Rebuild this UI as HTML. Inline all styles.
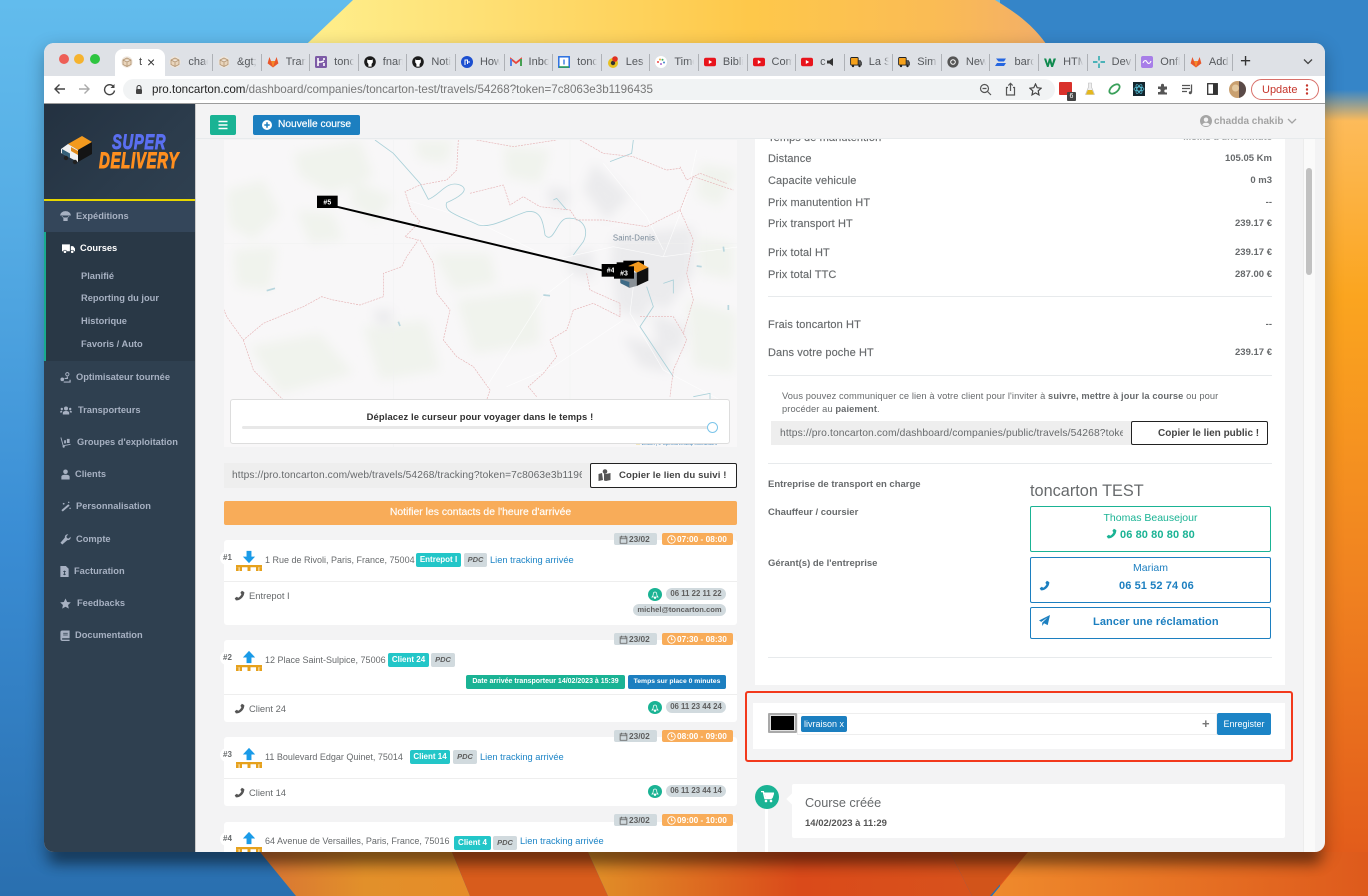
<!DOCTYPE html>
<html lang="fr"><head><meta charset="utf-8"><title>toncarton</title>
<style>
*{box-sizing:border-box}
html,body{margin:0;padding:0;width:1368px;height:896px;overflow:hidden;background:#e8701c;font-family:"Liberation Sans",sans-serif;color:#676a6c}
.a{position:absolute}
.t{position:absolute;white-space:nowrap;line-height:14px;height:14px;margin-top:1px}
#win{position:absolute;left:0;top:0;width:1368px;height:896px;clip-path:inset(43px 43px 44px 44px round 10px);background:#f3f3f4}
.tabs{position:absolute;left:164.4px;top:49px;display:flex}
.tab{position:relative;width:48.6px;height:27px}
.tab:after{content:"";position:absolute;right:0;top:5px;height:17px;width:1px;background:#aeb1b6}
.tab svg{position:absolute;left:5px;top:7px;width:12px;height:12px}
.tab span{position:absolute;left:24px;top:6px;width:20px;overflow:hidden;white-space:nowrap;font-size:11px;line-height:14px;color:#55585c;-webkit-mask-image:linear-gradient(90deg,#000 70%,transparent);mask-image:linear-gradient(90deg,#000 70%,transparent)}
.nav{font-size:9.3px;font-weight:bold;color:#a7b1c2;margin-top:2px}
.ni{position:absolute;left:60px;width:11px;height:11px;fill:#a7b1c2}
.l{font-size:11px;color:#676a6c;left:768px;-webkit-text-stroke:.15px #676a6c;letter-spacing:.1px}
.v{font-size:9.5px;font-weight:bold;color:#676a6c;right:96px}
.hr{position:absolute;left:768px;width:504px;height:1px;background:#e7eaec}
.card{position:absolute;left:224px;width:513px;background:#fff;border-radius:3px}
.div{position:absolute;left:224px;width:513px;height:1px;background:#eeeeee}
.bd{position:absolute;height:12px;line-height:12px;border-radius:2px;font-size:8.3px;font-weight:bold;white-space:nowrap}
.date{left:614px;width:43px;background:#d1dade;color:#5e5e5e;padding-left:15px}
.time{left:662px;width:71px;background:#f8ac59;color:#fff;padding-left:15px}
.date svg,.time svg{position:absolute;left:5px;top:1.5px;width:9px;height:9px}
.addr{font-size:9px;color:#676a6c}
.rw{font-size:9.4px;color:#676a6c}
.num{font-size:8px;font-weight:bold;color:#676a6c}
.numc{position:absolute;left:220px;width:14px;height:14px;border-radius:50%;background:#fff}
.tag{position:absolute;height:14px;line-height:14px;text-align:center;border-radius:2px;font-size:8px;font-weight:bold;color:#fff;background:#23c6c8}
.pdc{position:absolute;height:14px;line-height:14px;text-align:center;border-radius:2px;font-size:7.5px;font-weight:bold;font-style:italic;color:#5e5e5e;background:#d1dade}
.lk{font-size:9.3px;color:#1c84c6}
.pill{position:absolute;height:12px;line-height:12px;border-radius:6px;background:#d1dade;color:#5e5e5e;font-size:7.8px;font-weight:bold;text-align:center;white-space:nowrap}
.bell{position:absolute;left:648px;width:14px;height:13px;border-radius:50%;background:#1ab394}
.bell svg{position:absolute;left:3px;top:2.5px;width:8px;height:8px}
.ph{position:absolute;width:11px;height:11px}
</style></head><body>
<svg width="0" height="0" style="position:absolute"><defs>
<symbol id="phone" viewBox="0 0 16 16"><path d="M11.5 1 15 3C15.3 9.5 9 15.5 2.8 15L1 12 4.2 9.8 6 11.2C8.2 10.2 10 8.2 10.8 6L9.2 4.2Z"/></symbol>
<symbol id="cal" viewBox="0 0 12 12"><path d="M1.5 2.5h9v8.5h-9zM1.5 5h9M3.5 1v2.5M8.5 1v2.5" fill="none" stroke="currentColor" stroke-width="1.1"/></symbol>
<symbol id="clk" viewBox="0 0 12 12"><circle cx="6" cy="6" r="5" fill="none" stroke="currentColor" stroke-width="1.2"/><path d="M6 3v3.3h2.4" fill="none" stroke="currentColor" stroke-width="1.1"/></symbol>
<symbol id="bell" viewBox="0 0 12 12"><path d="M6 1.5C3.8 1.5 3.3 3.5 3.3 5.5 3.3 7.5 2 8.5 1.5 9h9C10 8.5 8.7 7.5 8.7 5.5 8.7 3.5 8.2 1.5 6 1.5ZM5 10h2v1H5Z" fill="none" stroke="#fff" stroke-width="1.1"/></symbol>
<symbol id="box" viewBox="0 0 12 12"><circle cx="6" cy="6" r="5.6" fill="#efe6dc"/><path d="M6 2 10 4v4.5L6 10.5 2 8.5V4ZM6 6v4.5M2 4l4 2 4-2" fill="#e9d5bc" stroke="#b39675" stroke-width=".8"/></symbol>
<symbol id="gl" viewBox="0 0 12 12"><path d="M6 11.5 .6 7.4 2.4 1 4 5h4l1.6-4 1.8 6.4Z" fill="#e8572c"/><path d="M6 11.5 4 5h4Z" fill="#f48a2a"/></symbol>
<symbol id="gh" viewBox="0 0 12 12"><circle cx="6" cy="6" r="5.8" fill="#1b1b1b"/><path d="M3.2 3.4 4.4 4h3.2l1.2-.6v3L7.6 8v2.6H4.4V8L3.2 6.4Z" fill="#fff"/></symbol>
<symbol id="yt" viewBox="0 0 12 12"><rect x="0" y="1.8" width="12" height="8.4" rx="2" fill="#e8141c"/><path d="M4.8 4v4l3.4-2Z" fill="#fff"/></symbol>
<symbol id="trk" viewBox="0 0 12 12"><rect x=".6" y="1.5" width="7.6" height="7.6" rx="1" fill="#f6a21c" stroke="#222" stroke-width=".9"/><path d="M8.2 4.5h2.2l1.1 2v2.6H8.2Z" fill="#555" stroke="#222" stroke-width=".6"/><circle cx="3" cy="10" r="1.2" fill="#222"/><circle cx="9.5" cy="10" r="1.2" fill="#222"/></symbol>
<symbol id="arr" viewBox="0 0 16 16"><path d="M5.2 1h5.6v6.5H15L8 15 1 7.5h4.2Z"/></symbol>
<symbol id="pal" viewBox="0 0 26 6"><path d="M0 0h26v2.2h-3.5V6H20V2.2h-5.5V6h-3V2.2H6V6H3.5V2.2H0Z" fill="#e6a11c"/><rect y="2.2" width="2.7" height="3.8" fill="#e6a11c"/><rect x="23.3" y="2.2" width="2.7" height="3.8" fill="#e6a11c"/></symbol>
</defs></svg>

<!-- wallpaper -->
<svg class="a" style="left:0;top:0" width="1368" height="896" viewBox="0 0 1368 896">
<defs>
<linearGradient id="gl1" x1="0" y1="0" x2="0" y2="1"><stop offset="0" stop-color="#62bced"/><stop offset=".25" stop-color="#55ace4"/><stop offset=".6" stop-color="#3a8dd4"/><stop offset="1" stop-color="#2a6faf"/></linearGradient>
<linearGradient id="gy" x1="0" y1="0" x2="1" y2="0"><stop offset="0" stop-color="#fff08e"/><stop offset=".2" stop-color="#fee37a"/><stop offset=".6" stop-color="#fec84a"/><stop offset=".85" stop-color="#fabb55"/><stop offset="1" stop-color="#f2ad6a"/></linearGradient>
<linearGradient id="gr" x1="0" y1="0" x2="0" y2="1"><stop offset="0" stop-color="#3585c8"/><stop offset=".1" stop-color="#3585c8"/><stop offset=".135" stop-color="#fdbb5a"/><stop offset=".33" stop-color="#fba51f"/><stop offset=".65" stop-color="#f08220"/><stop offset="1" stop-color="#e0561a"/></linearGradient>
<linearGradient id="gb" x1="0" y1="0" x2="1" y2="0"><stop offset="0" stop-color="#d87434"/><stop offset=".5" stop-color="#e2902a"/><stop offset="1" stop-color="#e68c28"/></linearGradient>
<linearGradient id="gb2" x1="0" y1="0" x2="1" y2="0"><stop offset="0" stop-color="#e19028"/><stop offset=".55" stop-color="#da4a1a"/><stop offset="1" stop-color="#d8521c"/></linearGradient>
<linearGradient id="gb3" x1="0" y1="0" x2="1" y2="0"><stop offset="0" stop-color="#ef8a2c"/><stop offset="1" stop-color="#de5a1c"/></linearGradient>
<filter id="bl2" x="-5%" y="-100%" width="110%" height="300%"><feGaussianBlur stdDeviation="7"/></filter>
</defs>
<rect width="1368" height="896" fill="url(#gl1)"/>
<rect x="1000" width="368" height="896" fill="url(#gr)"/>
<path d="M353 0H995C1020 15 1040 30 1056 60H290Z" fill="url(#gy)"/>
<path d="M260 852H452L470 896H296Z" fill="url(#gb)"/>
<path d="M452 852H588L608 896H470Z" fill="#d85c1c"/>
<path d="M588 852H950L972 896H608Z" fill="url(#gb2)"/>
<path d="M950 852H1028L990 896H972Z" fill="#d2541a"/>
<path d="M1028 852H1368V896H992Z" fill="url(#gb3)"/>
<rect x="50" y="846" width="1270" height="18" fill="#000" opacity=".38" filter="url(#bl2)"/>
</svg>
<div class="a" style="left:44px;top:43px;width:1281px;height:809px;border-radius:10px;box-shadow:0 6px 18px rgba(0,0,0,.3)"></div>

<div id="win">
<!-- tab strip -->
<div class="a" style="left:44px;top:43px;width:1281px;height:33px;background:#dee1e6"></div>
<i class="a" style="left:59px;top:54px;width:10px;height:10px;border-radius:50%;background:#ee5f57"></i>
<i class="a" style="left:74px;top:54px;width:10px;height:10px;border-radius:50%;background:#f5b32f"></i>
<i class="a" style="left:90px;top:54px;width:10px;height:10px;border-radius:50%;background:#2ec540"></i>
<div class="a" style="left:115px;top:49px;width:50px;height:28px;background:#fff;border-radius:8px 8px 0 0"></div>
<svg class="a" style="left:121px;top:56px" width="12" height="12"><use href="#box"/></svg>
<span class="t" style="left:139px;top:54px;font-size:11px;color:#444">t</span>
<span class="t" style="left:147px;top:54px;font-size:14px;color:#333">×</span>
<div class="tabs">
<div class="tab"><svg><use href="#box"/></svg><span>chadda</span></div>
<div class="tab"><svg><use href="#box"/></svg><span>&amp;gt;</span></div>
<div class="tab"><svg><use href="#gl"/></svg><span>Transp</span></div>
<div class="tab"><svg viewBox="0 0 12 12"><rect width="12" height="12" rx="1.5" fill="#7d5ba6"/><path d="M3 2v8M3 6h3l3-1M9 2v2M9 7v3" stroke="#fff" stroke-width="1.6" fill="none"/></svg><span>toncar</span></div>
<div class="tab"><svg><use href="#gh"/></svg><span>fnando</span></div>
<div class="tab"><svg><use href="#gh"/></svg><span>Notific</span></div>
<div class="tab"><svg viewBox="0 0 12 12"><circle cx="6" cy="6" r="6" fill="#1c4fd0"/><path d="M4 9V4h2.500v4M6.500 6H9" stroke="#fff" fill="none"/></svg><span>How t</span></div>
<div class="tab"><svg viewBox="0 0 12 12"><path d="M1 10V3l5 4 5-4v7" fill="none" stroke="#e8453c" stroke-width="1.8"/><path d="M1 10V3" stroke="#4285f4" stroke-width="1.8"/><path d="M11 10V3" stroke="#34a853" stroke-width="1.8"/></svg><span>Inbox</span></div>
<div class="tab"><svg viewBox="0 0 12 12"><rect x=".8" y=".8" width="10.4" height="10.4" fill="#fff" stroke="#2a6fe0" stroke-width="1.5"/><path d="M6 3.500v5" stroke="#2a6fe0" stroke-width="1.3"/><path d="M1 11h10" stroke="#2aa050" stroke-width="1.4"/></svg><span>toncar</span></div>
<div class="tab"><svg viewBox="0 0 12 12"><circle cx="6" cy="7" r="5" fill="#e8c020"/><circle cx="6" cy="7" r="2.2" fill="#333"/><circle cx="8" cy="3" r="2.8" fill="#e03020"/></svg><span>Les m</span></div>
<div class="tab"><svg viewBox="0 0 12 12"><circle cx="6" cy="6" r="6" fill="#fff"/><circle cx="3" cy="6" r="1" fill="#e44"/><circle cx="5" cy="3.500" r="1" fill="#ea4"/><circle cx="7.500" cy="3.800" r="1" fill="#4a6"/><circle cx="9" cy="6.500" r="1" fill="#48c"/><circle cx="6" cy="8" r="1" fill="#a6c"/></svg><span>Timel</span></div>
<div class="tab"><svg><use href="#yt"/></svg><span>Biblio</span></div>
<div class="tab"><svg><use href="#yt"/></svg><span>Comm</span></div>
<div class="tab"><svg><use href="#yt"/></svg><span style="width:6px">c</span><svg style="left:29px" viewBox="0 0 12 12"><path d="M2 4.500h2.500L8 2v8L4.500 7.500H2Z" fill="#333"/></svg></div>
<div class="tab"><svg><use href="#trk"/></svg><span>La Su</span></div>
<div class="tab"><svg><use href="#trk"/></svg><span>Simpl</span></div>
<div class="tab"><svg viewBox="0 0 12 12"><circle cx="6" cy="6" r="5.600" fill="#555"/><circle cx="6" cy="6" r="2.800" fill="#fff"/><circle cx="6" cy="6" r="1.800" fill="#555"/></svg><span>New T</span></div>
<div class="tab"><svg viewBox="0 0 12 12"><path d="M1 2.500h10L9 5.500H3.500ZM2 7h9l-2 3H0Z" fill="#2666e0"/></svg><span>barco</span></div>
<div class="tab"><svg viewBox="0 0 12 12"><path d="M0 2.500h2.200l1.400 5 1.400-5h1.800l1.400 5 1.400-5H12L9 11H7.200L5.900 6.500 4.600 11H3Z" fill="#0f8a4f"/></svg><span>HTML</span></div>
<div class="tab"><svg viewBox="0 0 12 12"><path d="M6 0v4.500M6 7.500V12M0 6h4.500M7.500 6H12" stroke="#19a3a8" stroke-width="1.4"/></svg><span>Devis</span></div>
<div class="tab"><svg viewBox="0 0 12 12"><rect width="12" height="12" rx="2" fill="#a77ee8"/><path d="M2 7c1-3 3-3 4-1s3 2 4-1" stroke="#fff" fill="none" stroke-width="1.1"/></svg><span>Onfle</span></div>
<div class="tab"><svg><use href="#gl"/></svg><span>Add a</span></div>
</div>
<span class="t" style="left:1240px;top:53px;font-size:19px;color:#333;line-height:16px;height:16px">+</span>
<svg class="a" style="left:1303px;top:58px" width="10" height="8"><path d="M1 1.500 5 5.500 9 1.500" fill="none" stroke="#444" stroke-width="1.3"/></svg>

<!-- toolbar -->
<div class="a" style="left:44px;top:76px;width:1281px;height:27px;background:#fff"></div>
<div class="a" style="left:44px;top:103px;width:1281px;height:1.5px;background:#9c9c9c"></div>
<svg class="a" style="left:53px;top:83px" width="13" height="12"><path d="M12 6H2M6.500 1.500 2 6l4.500 4.500" fill="none" stroke="#444" stroke-width="1.4"/></svg>
<svg class="a" style="left:78px;top:83px" width="13" height="12"><path d="M1 6h10M6.500 1.500 11 6l-4.500 4.500" fill="none" stroke="#aaa" stroke-width="1.4"/></svg>
<svg class="a" style="left:103px;top:83px" width="13" height="13"><path d="M10.800 4A5 5 0 1 0 11.500 7.500" fill="none" stroke="#444" stroke-width="1.4"/><path d="M11.500 1v4h-4Z" fill="#444"/></svg>
<div class="a" style="left:123px;top:79px;width:932px;height:21px;border-radius:11px;background:#f1f3f4"></div>
<svg class="a" style="left:135px;top:84px" width="8" height="11"><path d="M2 5V3.500a2 2 0 0 1 4 0V5" fill="none" stroke="#444" stroke-width="1.1"/><rect x="1" y="5" width="6" height="5" rx="1" fill="#444"/></svg>
<span class="t" style="left:152px;top:82px;font-size:11.6px;color:#777"><span style="color:#222">pro.toncarton.com</span>/dashboard/companies/toncarton-test/travels/54268?token=7c8063e3b1196435</span>
<svg class="a" style="left:979px;top:83px" width="13" height="13"><circle cx="5.500" cy="5.500" r="4" fill="none" stroke="#555" stroke-width="1.2"/><path d="M8.500 8.500 12 12M3.500 5.500h4" stroke="#555" stroke-width="1.2"/></svg>
<svg class="a" style="left:1005px;top:82px" width="11" height="14"><path d="M3 5.500H1.500V13h8V5.500H8M5.500 9V1.500M3.300 3.500l2.200-2.200 2.200 2.200" fill="none" stroke="#555" stroke-width="1.2"/></svg>
<svg class="a" style="left:1029px;top:83px" width="13" height="13"><path d="M6.500 1 8.200 4.700l4 .5-3 2.700.8 4-3.500-2-3.500 2 .8-4-3-2.700 4-.5Z" fill="none" stroke="#444" stroke-width="1.2"/></svg>
<div class="a" style="left:1059px;top:82px;width:13px;height:13px;background:#d9312b;border-radius:1px"></div>
<div class="a" style="left:1067px;top:92px;width:9px;height:9px;background:#444;border-radius:1px;color:#fff;font-size:7px;line-height:9px;text-align:center">6</div>
<svg class="a" style="left:1085px;top:82px" width="10" height="14"><path d="M3.500 1h3v4l3 7.500H.5l3-7.500Z" fill="#eee" stroke="#bbb" stroke-width=".6"/><path d="M2.800 8h4.400L9 12.500H1Z" fill="#e4b71c"/></svg>
<svg class="a" style="left:1108px;top:83px" width="13" height="12"><ellipse cx="6.500" cy="6" rx="6" ry="3.500" fill="none" stroke="#3aa05a" stroke-width="1.8" transform="rotate(-40 6.500 6)"/></svg>
<div class="a" style="left:1133px;top:82px;width:12px;height:14px;background:#15262e"></div>
<svg class="a" style="left:1133px;top:83px" width="12" height="12"><g fill="none" stroke="#5ac8e0" stroke-width=".7"><ellipse cx="6" cy="6" rx="5" ry="2"/><ellipse cx="6" cy="6" rx="5" ry="2" transform="rotate(60 6 6)"/><ellipse cx="6" cy="6" rx="5" ry="2" transform="rotate(120 6 6)"/></g></svg>
<svg class="a" style="left:1157px;top:83px" width="12" height="12"><path d="M1 3.500h3V2.300a1.500 1.500 0 0 1 3 0v1.200h3v3H8.800a1.500 1.500 0 0 0 0 3H10V11.500H1V9h1.200a1.500 1.500 0 0 0 0-3H1Z" fill="#555"/></svg>
<svg class="a" style="left:1181px;top:83px" width="13" height="12"><path d="M1 2.500h8M1 5.500h8M1 8.500h5" stroke="#555" stroke-width="1.2"/><path d="M10.500 1.500v8" stroke="#555" stroke-width="1.3"/><circle cx="9.300" cy="9.800" r="1.500" fill="#555"/></svg>
<svg class="a" style="left:1207px;top:83px" width="11" height="12"><rect x=".7" y=".7" width="9.600" height="10.600" fill="none" stroke="#333" stroke-width="1.3"/><rect x="6" y="1" width="4" height="10" fill="#333"/></svg>
<svg class="a" style="left:1229px;top:81px" width="17" height="17"><defs><clipPath id="av"><circle cx="8.500" cy="8.500" r="8.500"/></clipPath></defs><g clip-path="url(#av)"><rect width="17" height="17" fill="#c9a070"/><rect x="10" width="7" height="17" fill="#5a4a48"/><circle cx="6.500" cy="7" r="3.500" fill="#e4c9a0"/></g></svg>
<div class="a" style="left:1251px;top:79px;width:68px;height:21px;border-radius:11px;border:1px solid #d9706a;background:#fff"></div>
<span class="t" style="left:1262px;top:82px;font-size:11px;color:#c5352b">Update</span>
<svg class="a" style="left:1305px;top:84px" width="4" height="12"><circle cx="2" cy="1.500" r="1.200" fill="#c5352b"/><circle cx="2" cy="5.500" r="1.200" fill="#c5352b"/><circle cx="2" cy="9.500" r="1.200" fill="#c5352b"/></svg>

<!-- sidebar -->
<div class="a" style="left:44px;top:104px;width:151px;height:748px;background:#2f4050"></div>
<div class="a" style="left:44px;top:104px;width:151px;height:95px;background:linear-gradient(135deg,#233140 0%,#2b3b4b 60%,#2f4050 100%)"></div>
<div class="a" style="left:44px;top:199px;width:151px;height:2px;background:#e6d600"></div>
<div class="a" style="left:44px;top:201px;width:151px;height:31px;background:#34465a"></div>
<div class="a" style="left:44px;top:232px;width:151px;height:129px;background:#293846;border-left:2px solid #19aa8d"></div>
<div class="a" style="left:195px;top:104px;width:1px;height:748px;background:#c9c9c9"></div>
<svg class="a" style="left:60px;top:135px" width="34" height="32" viewBox="0 0 34 32"><path d="M8 9 22 1 32 7 18 15Z" fill="#f39a1e"/><path d="M18 15 32 7V19L18 27Z" fill="#141414"/><path d="M8 9 18 15V27L1 18V14Z" fill="#f1f1f1"/><path d="M2 14 10 18.500V23L2 18.500Z" fill="#36617a"/><path d="M11 12 18 16V20L11 16Z" fill="#e08a1a"/><circle cx="6" cy="23" r="2.200" fill="#222"/><circle cx="15" cy="27" r="2.200" fill="#222"/></svg>
<span class="t" style="left:112px;top:131px;width:90px;height:21px;line-height:21px;font-size:21px;font-weight:bold;font-style:italic;color:#5a6ff0;transform:scaleX(.7);transform-origin:0 50%;-webkit-text-stroke:.9px #5a6ff0;letter-spacing:1px">SUPER</span>
<span class="t" style="left:99px;top:149px;width:150px;height:22px;line-height:22px;font-size:22px;font-weight:bold;font-style:italic;color:#ff8f1f;transform:scaleX(.68);transform-origin:0 50%;-webkit-text-stroke:1px #ff8f1f;letter-spacing:1px">DELIVERY</span>

<svg class="ni" style="top:211px" viewBox="0 0 12 12"><path d="M6 .5C9 .5 11.500 2.500 11.500 4.500H.5C.5 2.500 3 .5 6 .5ZM4 7.500h4v3H4ZM2 5.500 4.500 8M10 5.500 7.500 8" stroke="#a7b1c2" stroke-width=".7"/></svg>
<span class="t nav" style="left:76px;top:207px">Expéditions</span>
<svg class="ni" style="left:62px;top:243px;fill:#fff;width:13px" viewBox="0 0 14 11"><path d="M0 1h8.500v7.500H0ZM9.500 3h2.500l2 2.500v3H9.500Z"/><circle cx="3.200" cy="9" r="1.700" stroke="#293846" stroke-width=".6"/><circle cx="11" cy="9" r="1.700" stroke="#293846" stroke-width=".6"/></svg>
<span class="t nav" style="left:80px;top:239px;color:#fff">Courses</span>
<span class="t nav" style="left:81px;top:267px">Planifié</span>
<span class="t nav" style="left:81px;top:289px">Reporting du jour</span>
<span class="t nav" style="left:81px;top:312px">Historique</span>
<span class="t nav" style="left:81px;top:335px">Favoris / Auto</span>
<svg class="ni" style="top:372px" viewBox="0 0 12 12"><circle cx="8" cy="2.500" r="1.800" fill="none" stroke="#a7b1c2"/><circle cx="2.500" cy="8" r="2"/><path d="M8 5V7H5M4 11h7V8.500" fill="none" stroke="#a7b1c2" stroke-width="1.300"/></svg>
<span class="t nav" style="left:76px;top:368px">Optimisateur tournée</span>
<svg class="ni" style="top:405px;width:12px" viewBox="0 0 12 10"><circle cx="6" cy="3" r="2"/><path d="M2.800 9V7.500C2.800 6 4 5.500 6 5.500S9.200 6 9.200 7.500V9Z"/><circle cx="1.800" cy="3.500" r="1.200"/><circle cx="10.200" cy="3.500" r="1.200"/><path d="M0 7C0 5.500 1 5 2.300 5.300L2 7ZM12 7C12 5.500 11 5 9.700 5.300L10 7Z"/></svg>
<span class="t nav" style="left:78px;top:401px">Transporteurs</span>
<svg class="ni" style="top:437px" viewBox="0 0 12 12"><path d="M1 .5 3.500 9.500 11.500 8" fill="none" stroke="#a7b1c2" stroke-width="1"/><path d="M4.500 3.500h2v3.500h-2ZM7.500 2h3v4.500h-3Z"/><circle cx="4" cy="10.500" r="1.200"/></svg>
<span class="t nav" style="left:77px;top:433px">Groupes d'exploitation</span>
<svg class="ni" style="top:469px" viewBox="0 0 12 12"><circle cx="6" cy="3" r="2.500"/><path d="M1.500 11.500V8.500C1.500 7 3 6.300 6 6.300S10.500 7 10.500 8.500V11.500Z"/></svg>
<span class="t nav" style="left:75px;top:465px">Clients</span>
<svg class="ni" style="top:501px" viewBox="0 0 12 12"><path d="M9 3.500 10.500 5 3 11.500 1.500 10Z"/><circle cx="4" cy="3" r="1"/><circle cx="9.500" cy="1.500" r=".8"/><circle cx="11" cy="8" r=".8"/></svg>
<span class="t nav" style="left:76px;top:497px">Personnalisation</span>
<svg class="ni" style="top:534px" viewBox="0 0 12 12"><path d="M11.500 3 9.500 5 7.500 4.500 7 2.500 9 .5C7 0 5 1.500 5.300 4L.5 9.500 2.500 11.500 8 6.700C10.500 7 12 5 11.500 3Z"/></svg>
<span class="t nav" style="left:76px;top:530px">Compte</span>
<svg class="ni" style="left:60px;top:566px;width:9px" viewBox="0 0 9 12"><path d="M0 0h6l3 3v9H0Z"/><path d="M4.500 5v5M3 6h3M3 9h3" stroke="#2f4050" stroke-width=".9"/></svg>
<span class="t nav" style="left:74px;top:562px">Facturation</span>
<svg class="ni" style="top:598px" viewBox="0 0 12 12"><path d="M6 .5 7.800 4.300l4 .5-3 2.800.8 4-3.600-2-3.600 2 .8-4-3-2.800 4-.5Z"/></svg>
<span class="t nav" style="left:77px;top:594px">Feedbacks</span>
<svg class="ni" style="top:630px;width:10px" viewBox="0 0 10 12"><path d="M2 .5h8v8.500H2.500C1.500 9 1.500 10.500 2.500 10.500H10V12H2C.5 12 0 11 0 10V2.500C0 1 1 .5 2 .5Z"/><path d="M3 3.500h5M3 5.500h5" stroke="#2f4050" stroke-width=".8"/></svg>
<span class="t nav" style="left:75px;top:626px">Documentation</span>

<!-- top bar -->
<div class="a" style="left:196px;top:104px;width:1129px;height:35px;background:#f3f3f4;border-bottom:1px solid #e7eaec"></div>
<div class="a" style="left:210px;top:115px;width:26px;height:20px;background:#1ab394;border-radius:2px"></div>
<svg class="a" style="left:218px;top:120px" width="10" height="10"><path d="M.5 1.500h9M.5 5h9M.5 8.500h9" stroke="#fff" stroke-width="1.6"/></svg>
<div class="a" style="left:253px;top:115px;width:107px;height:20px;background:#1c7fc0;border-radius:2px"></div>
<svg class="a" style="left:262px;top:120px" width="10" height="10"><circle cx="5" cy="5" r="5" fill="#fff"/><path d="M5 2.300v5.400M2.300 5h5.400" stroke="#1c7fc0" stroke-width="1.5"/></svg>
<span class="t" style="left:278px;top:117px;font-size:10.2px;color:#fff;-webkit-text-stroke:.2px #fff">Nouvelle course</span>

<!-- map -->
<div class="a" style="left:224px;top:140px;width:513px;height:307px;overflow:hidden;background:#f8f7f8">
<svg class="a" style="left:-4px;top:0" width="520" height="310" viewBox="0 0 1560 930">
<defs><filter id="bm" x="-10%" y="-10%" width="120%" height="120%"><feGaussianBlur stdDeviation="16"/></filter></defs>
<g fill="#f0f3ed" filter="url(#bm)">
<path d="M220 40 420 0 460 110 330 160 240 110Z"/><path d="M20 150 130 120 180 220 100 300 30 260Z"/><path d="M230 210 340 220 370 300 270 310Z"/><path d="M40 330 170 320 150 450 50 440Z"/><path d="M400 120 520 170 470 250 390 190Z"/><path d="M640 340 810 340 830 430 700 450Z"/><path d="M710 480 950 450 960 610 760 640Z"/><path d="M90 620 300 580 400 700 180 760Z"/><path d="M430 560 620 540 660 690 480 720Z"/><path d="M580 0 700 0 680 70 600 60Z"/><path d="M850 20 990 30 960 130 860 110Z"/><path d="M1440 70 1550 90 1500 200 1430 170Z"/><path d="M1420 290 1540 310 1540 420 1440 400Z"/><path d="M1400 480 1550 520 1540 700 1420 680Z"/>
</g>
<g fill="#ebebed" filter="url(#bm)">
<path d="M1120 70 1230 170 1160 240 1090 150Z"/><path d="M1180 290 1420 260 1420 400 1340 510 1240 470 1170 400Z"/><path d="M1180 420 1290 420 1280 540 1190 510Z"/><path d="M1210 590 1340 620 1350 700 1260 680Z"/><path d="M1040 340 1120 330 1120 420 1050 400Z"/><path d="M980 140 1050 150 1040 210 990 200Z"/><path d="M1300 520 1400 560 1380 640 1310 610Z"/><path d="M460 510 520 510 510 560 470 550Z"/>
</g>
<g fill="none" stroke="#fff" stroke-width="1.800" opacity=".85">
<path d="M0 310H1560M520 0V930M1050 0V780" stroke="#f0f0f1" stroke-width="1.500"/>
<path d="M560 180 760 240 1000 360 1180 320 1330 350 1560 320"/><path d="M1240 440 1230 520 1330 690 1500 780"/><path d="M1060 400 970 470 800 740"/><path d="M1210 540 1000 680 860 740"/><path d="M1150 70 1280 230 1330 330"/><path d="M1330 350 1400 170 1430 30"/>
</g>
<g fill="none" stroke="#a9d0d8" stroke-width="2.500">
<path d="M465 0 520 40 600 130 625 178C660 165 680 120 720 135 755 150 710 175 680 188 670 215 710 225 775 255 815 265 860 235 920 215 965 208 970 250 975 285 1000 315 1010 240 1040 235 1085 230 1110 265 1090 305L1060 345"/>
<path d="M1000 180 1010 175 1040 210M1240 0 1235 40 1170 65"/>
<path d="M1280 440 1300 500 1260 560 1360 710"/>
<path d="M1330 430 1360 420 1360 460"/>
<path d="M1420 770 1470 760 1470 800"/>
<path d="M140 452 165 445M535 545 540 558M970 465 990 467M1430 378 1445 380M1510 320 1512 335M1525 495 1525 510" stroke-width="5" stroke="#b8d6de"/>
</g>
<g fill="none" stroke="#e6b4b6" stroke-width="2" stroke-dasharray="6 3">
<path d="M715 0 710 90 680 120 600 135 555 155 575 215 600 245 555 290 595 300 560 350 545 380 490 400 490 470 420 495 340 480 305 470 250 500 130 550 70 600 20 530 0 480"/>
<path d="M600 300 640 370 650 460 690 510 670 600 710 650 760 680 810 750 800 780"/>
<path d="M750 160 850 135 870 195 910 170 960 200 1050 210 1070 240 1150 240 1280 260 1380 210 1420 110 1540 150"/>
<path d="M1380 80 1400 120 1440 100 1520 130M1080 0 1150 40 1240 50 1340 90 1380 85"/>
<path d="M1100 400 1110 450 1200 490 1200 530 1120 490 1060 510 1040 570 990 600 1010 650 970 700 925 740 950 770"/>
<path d="M1380 210 1420 300 1400 400 1420 480 1390 580 1400 600 1360 690 1350 770"/>
<path d="M1260 530 1360 530 1390 580"/>
<path d="M70 600 100 690 170 760 190 780M770 0 880 20 1010 0"/>
</g>
<text x="1242" y="302" font-family="Liberation Sans" font-size="23.500" fill="#7a8a99" text-anchor="middle" letter-spacing=".5">Saint-Denis</text>
<path d="M350 200 1150 392" stroke="#000" stroke-width="6"/>
<rect x="291" y="167" width="62" height="37" fill="#000"/>
<text x="322" y="193" font-family="Liberation Sans" font-size="21" font-weight="bold" fill="#fff" text-anchor="middle">#5</text>
<rect x="1145" y="372" width="60" height="38" fill="#000"/>
<text x="1172" y="398" font-family="Liberation Sans" font-size="21" font-weight="bold" fill="#fff" text-anchor="middle">#4</text>
<rect x="1190" y="367" width="60" height="20" fill="#000"/>
<rect x="1210" y="362" width="62" height="20" fill="#000"/>
<path d="M1225 378 1255 365 1285 382 1250 398Z" fill="#f39a1e"/>
<path d="M1250 398 1285 382V422L1250 438Z" fill="#111"/>
<path d="M1200 392 1250 398V438L1228 444 1200 428Z" fill="#8a9197"/>
<path d="M1202 418 1228 426V442L1202 430Z" fill="#3d6a86"/>
<rect x="1182" y="379" width="60" height="37" fill="#000"/>
<text x="1212" y="406" font-family="Liberation Sans" font-size="21" font-weight="bold" fill="#fff" text-anchor="middle">#3</text>
<rect x="1248" y="905" width="12" height="8" fill="#e0c24c"/>
<text x="1265" y="915" font-family="Liberation Sans" font-size="13" fill="#3b82b8">Leaflet | © OpenStreetMap contributors</text>
</svg>
<div class="a" style="left:6px;top:259px;width:500px;height:45px;background:#fff;border:1px solid #ddd;border-radius:3px"></div>
<span class="t" style="left:6px;top:269px;width:500px;text-align:center;font-size:9.4px;font-weight:bold;color:#2f2f2f;letter-spacing:.12px">Déplacez le curseur pour voyager dans le temps !</span>
<div class="a" style="left:18px;top:286px;width:470px;height:3px;background:#e8e8e8;border-radius:2px"></div>
<div class="a" style="left:483px;top:282px;width:11px;height:11px;border-radius:50%;background:#fff;border:1px solid #7cc5ea"></div>
</div>

<!-- tracking input -->
<div class="a" style="left:224px;top:463px;width:367px;height:25px;background:#eee"></div>
<div class="a" style="left:232px;top:469px;width:350px;height:14px;overflow:hidden;white-space:nowrap;font-size:10.2px;line-height:14px;color:#676a6c;letter-spacing:.1px">https://pro.toncarton.com/web/travels/54268/tracking?token=7c8063e3b1196435</div>
<div class="a" style="left:590px;top:463px;width:147px;height:25px;background:#fff;border:1px solid #222;border-radius:2px"></div>
<svg class="a" style="left:598px;top:469px" width="13" height="12" viewBox="0 0 13 12"><path d="M.5 5 4 4l1 7-4.500 1ZM6 4.500 8 5l4.500-1v7L8 12 6 11.500Z" fill="#555"/><circle cx="7" cy="2.500" r="2.300" fill="#555"/></svg>
<span class="t" style="left:619px;top:468px;font-size:9.6px;font-weight:bold;color:#444;letter-spacing:.1px">Copier le lien du suivi !</span>
<div class="a" style="left:224px;top:501px;width:513px;height:24px;background:#f8ac59;border-radius:2px;color:#fff;font-size:10.4px;line-height:24px;text-align:center;-webkit-text-stroke:.15px #fff">Notifier les contacts de l'heure d'arrivée</div>

<!-- stops -->
<div class="card" style="top:540px;height:85px"></div><div class="div" style="top:581px"></div>
<div class="card" style="top:640px;height:82px"></div><div class="div" style="top:694px"></div>
<div class="card" style="top:737px;height:69px"></div><div class="div" style="top:778px"></div>
<div class="card" style="top:822px;height:40px"></div>

<div class="bd date" style="top:533px"><svg style="color:#5e5e5e"><use href="#cal"/></svg>23/02</div><div class="bd time" style="top:533px"><svg style="color:#fff"><use href="#clk"/></svg>07:00 - 08:00</div>
<div class="bd date" style="top:633px"><svg style="color:#5e5e5e"><use href="#cal"/></svg>23/02</div><div class="bd time" style="top:633px"><svg style="color:#fff"><use href="#clk"/></svg>07:30 - 08:30</div>
<div class="bd date" style="top:730px"><svg style="color:#5e5e5e"><use href="#cal"/></svg>23/02</div><div class="bd time" style="top:730px"><svg style="color:#fff"><use href="#clk"/></svg>08:00 - 09:00</div>
<div class="bd date" style="top:814px"><svg style="color:#5e5e5e"><use href="#cal"/></svg>23/02</div><div class="bd time" style="top:814px"><svg style="color:#fff"><use href="#clk"/></svg>09:00 - 10:00</div>

<!-- 1 -->
<i class="numc" style="top:551px"></i><span class="t num" style="left:223px;top:550px">#1</span>
<svg class="a" style="left:241px;top:550px;fill:#1a9be8" width="16" height="14"><use href="#arr"/></svg>
<svg class="a" style="left:236px;top:565px" width="26" height="6"><use href="#pal"/></svg>
<span class="t addr" style="left:265px;top:552px">1 Rue de Rivoli, Paris, France, 75004</span>
<div class="tag" style="left:416px;top:553px;width:45px">Entrepot I</div><div class="pdc" style="left:464px;top:553px;width:23px">PDC</div>
<span class="t lk" style="left:490px;top:552px">Lien tracking arrivée</span>
<svg class="ph" style="left:234px;top:590px;fill:#555"><use href="#phone"/></svg>
<span class="t rw" style="left:249px;top:588px">Entrepot I</span>
<div class="bell" style="top:588px"><svg><use href="#bell"/></svg></div><div class="pill" style="left:666px;top:588px;width:60px">06 11 22 11 22</div>
<div class="pill" style="left:633px;top:604px;width:93px;font-size:7.6px">michel@toncarton.com</div>
<!-- 2 -->
<i class="numc" style="top:651px"></i><span class="t num" style="left:223px;top:650px">#2</span>
<svg class="a" style="left:241px;top:650px;fill:#1a9be8;transform:scaleY(-1)" width="16" height="14"><use href="#arr"/></svg>
<svg class="a" style="left:236px;top:665px" width="26" height="6"><use href="#pal"/></svg>
<span class="t addr" style="left:265px;top:652px">12 Place Saint-Sulpice, 75006</span>
<div class="tag" style="left:388px;top:653px;width:41px">Client 24</div><div class="pdc" style="left:431px;top:653px;width:24px">PDC</div>
<div class="tag" style="left:466px;top:675px;width:159px;background:#1ab394;font-size:7px">Date arrivée transporteur 14/02/2023 à 15:39</div>
<div class="tag" style="left:628px;top:675px;width:98px;background:#1c7fc0;font-size:6.8px">Temps sur place 0 minutes</div>
<svg class="ph" style="left:234px;top:703px;fill:#555"><use href="#phone"/></svg>
<span class="t rw" style="left:249px;top:701px">Client 24</span>
<div class="bell" style="top:701px"><svg><use href="#bell"/></svg></div><div class="pill" style="left:666px;top:701px;width:60px">06 11 23 44 24</div>
<!-- 3 -->
<i class="numc" style="top:748px"></i><span class="t num" style="left:223px;top:747px">#3</span>
<svg class="a" style="left:241px;top:747px;fill:#1a9be8;transform:scaleY(-1)" width="16" height="14"><use href="#arr"/></svg>
<svg class="a" style="left:236px;top:762px" width="26" height="6"><use href="#pal"/></svg>
<span class="t addr" style="left:265px;top:749px">11 Boulevard Edgar Quinet, 75014</span>
<div class="tag" style="left:410px;top:750px;width:40px">Client 14</div><div class="pdc" style="left:453px;top:750px;width:24px">PDC</div>
<span class="t lk" style="left:480px;top:749px">Lien tracking arrivée</span>
<svg class="ph" style="left:234px;top:787px;fill:#555"><use href="#phone"/></svg>
<span class="t rw" style="left:249px;top:785px">Client 14</span>
<div class="bell" style="top:785px"><svg><use href="#bell"/></svg></div><div class="pill" style="left:666px;top:785px;width:60px">06 11 23 44 14</div>
<!-- 4 -->
<i class="numc" style="top:832px"></i><span class="t num" style="left:223px;top:831px">#4</span>
<svg class="a" style="left:241px;top:831px;fill:#1a9be8;transform:scaleY(-1)" width="16" height="14"><use href="#arr"/></svg>
<svg class="a" style="left:236px;top:847px" width="26" height="6"><use href="#pal"/></svg>
<span class="t addr" style="left:265px;top:833px">64 Avenue de Versailles, Paris, France, 75016</span>
<div class="tag" style="left:454px;top:836px;width:37px">Client 4</div><div class="pdc" style="left:493px;top:836px;width:24px">PDC</div>
<span class="t lk" style="left:520px;top:833px">Lien tracking arrivée</span>

<!-- right panel -->
<div class="a" style="left:755px;top:139px;width:530px;height:546px;background:#fff"></div>
<span class="t l" style="top:130px">Temps de manutention</span>
<span class="t v" style="top:130px;color:#a5a7a8">Moins d'une minute</span>
<span class="t l" style="top:151px">Distance</span><span class="t v" style="top:151px">105.05 Km</span>
<span class="t l" style="top:173px">Capacite vehicule</span><span class="t v" style="top:173px">0 m3</span>
<span class="t l" style="top:195px">Prix manutention HT</span><span class="t v" style="top:195px">--</span>
<span class="t l" style="top:216px">Prix transport HT</span><span class="t v" style="top:216px">239.17 €</span>
<span class="t l" style="top:245px">Prix total HT</span><span class="t v" style="top:245px">239.17 €</span>
<span class="t l" style="top:267px">Prix total TTC</span><span class="t v" style="top:267px">287.00 €</span>
<div class="hr" style="top:296px"></div>
<span class="t l" style="top:317px">Frais toncarton HT</span><span class="t v" style="top:317px">--</span>
<span class="t l" style="top:345px">Dans votre poche HT</span><span class="t v" style="top:345px">239.17 €</span>
<div class="hr" style="top:375px"></div>
<div class="a" style="left:755px;top:104px;width:530px;height:35px;background:#f3f3f4;border-bottom:1px solid #e7eaec"></div>
<!-- user -->
<svg class="a" style="left:1200px;top:115px" width="12" height="12"><circle cx="6" cy="6" r="6" fill="#a5a5a5"/><circle cx="6" cy="4.700" r="2.200" fill="#f3f3f4"/><path d="M2.300 10C3 8 4.500 7.800 6 7.800S9 8 9.700 10C8 11.300 4 11.300 2.300 10Z" fill="#f3f3f4"/></svg>
<span class="t" style="left:1214px;top:114px;font-size:10px;font-weight:bold;color:#a3a3a3">chadda chakib</span>
<svg class="a" style="left:1287px;top:118px" width="10" height="7"><path d="M1 1 5 5 9 1" fill="none" stroke="#a3a3a3" stroke-width="1.3"/></svg>

<span class="t" style="left:782px;top:388px;font-size:9.3px;color:#676a6c;letter-spacing:.1px">Vous pouvez communiquer ce lien à votre client pour l'inviter à <b>suivre, mettre à jour la course</b> ou pour</span>
<span class="t" style="left:782px;top:401px;font-size:9.3px;color:#676a6c;letter-spacing:.1px">procéder au <b>paiement</b>.</span>
<div class="a" style="left:771px;top:421px;width:361px;height:24px;background:#eee"></div>
<div class="a" style="left:780px;top:427px;width:343px;height:14px;overflow:hidden;white-space:nowrap;font-size:10.3px;line-height:14px;color:#676a6c;letter-spacing:.11px">https://pro.toncarton.com/dashboard/companies/public/travels/54268?token</div>
<div class="a" style="left:1131px;top:421px;width:137px;height:24px;background:#fff;border:1px solid #222;border-radius:2px"></div>
<span class="t" style="left:1158px;top:426px;font-size:10px;font-weight:bold;color:#444">Copier le lien public !</span>
<div class="hr" style="top:463px"></div>
<span class="t" style="left:768px;top:477px;font-size:9.5px;font-weight:bold;color:#676a6c">Entreprise de transport en charge</span>
<span class="t" style="left:768px;top:505px;font-size:9.5px;font-weight:bold;color:#676a6c">Chauffeur / coursier</span>
<span class="t" style="left:768px;top:556px;font-size:9.5px;font-weight:bold;color:#676a6c">Gérant(s) de l'entreprise</span>
<span class="t" style="left:1030px;top:480px;height:20px;line-height:20px;font-size:16.3px;color:#676a6c">toncarton TEST</span>
<div class="a" style="left:1030px;top:506px;width:241px;height:46px;border:1px solid #1ab394;border-radius:2px"></div>
<span class="t" style="left:1030px;top:510px;width:241px;text-align:center;font-size:10.5px;color:#1ab394">Thomas Beausejour</span>
<svg class="a" style="left:1106px;top:528px;fill:#1ab394" width="11" height="11"><use href="#phone"/></svg>
<span class="t" style="left:1120px;top:527px;font-size:11px;font-weight:bold;color:#1ab394;letter-spacing:.1px">06 80 80 80 80</span>
<div class="a" style="left:1030px;top:557px;width:241px;height:46px;border:1px solid #1c7fc0;border-radius:2px"></div>
<span class="t" style="left:1030px;top:560px;width:241px;text-align:center;font-size:10.5px;color:#1c7fc0">Mariam</span>
<svg class="a" style="left:1039px;top:580px;fill:#1c7fc0" width="11" height="11"><use href="#phone"/></svg>
<span class="t" style="left:1119px;top:578px;font-size:11px;font-weight:bold;color:#1c7fc0;letter-spacing:.1px">06 51 52 74 06</span>
<div class="a" style="left:1030px;top:607px;width:241px;height:32px;border:1px solid #1c7fc0;border-radius:2px"></div>
<svg class="a" style="left:1039px;top:615px" width="11" height="11" viewBox="0 0 12 12"><path d="M12 0 9.500 11 5.500 9 3.500 12V8.500L9.500 2.500 2.500 7.500 0 6Z" fill="#1c7fc0"/></svg>
<span class="t" style="left:1093px;top:614px;font-size:11px;font-weight:bold;color:#1c7fc0;letter-spacing:.1px">Lancer une réclamation</span>
<div class="hr" style="top:657px"></div>

<!-- scrollbar -->
<div class="a" style="left:1303px;top:139px;width:12px;height:713px;background:#fafafa;border-left:1px solid #ececec"></div>
<div class="a" style="left:1306px;top:168px;width:6px;height:107px;border-radius:3px;background:#c1c1c1"></div>

<!-- tag box -->
<div class="a" style="left:745px;top:691px;width:548px;height:71px;border:2px solid #f2391c;border-radius:3px"></div>
<div class="a" style="left:753px;top:703px;width:532px;height:46px;background:#fff"></div>
<div class="a" style="left:768px;top:713px;width:29px;height:20px;background:#000;border:2px solid #a9a9a9;outline:1px solid #e0e0e0;outline-offset:-3px;border-radius:1px;box-shadow:inset 0 0 0 1px #eee"></div>
<div class="a" style="left:797px;top:713px;width:420px;height:22px;background:#fff;border:1px solid #eeeeee"></div>
<div class="a" style="left:801px;top:716px;width:46px;height:16px;background:#1c7fc0;border-radius:2px;color:#fff;font-size:9px;line-height:16px;text-align:center;white-space:nowrap">livraison x</div>
<span class="t" style="left:1202px;top:716px;font-size:13px;font-weight:bold;color:#777">+</span>
<div class="a" style="left:1217px;top:713px;width:54px;height:22px;background:#1c84c6;border-radius:2px;color:#fff;font-size:9px;line-height:22px;text-align:center">Enregister</div>

<!-- timeline -->
<div class="a" style="left:765px;top:805px;width:3px;height:50px;background:#fff"></div>
<div class="a" style="left:755px;top:785px;width:24px;height:24px;border-radius:50%;background:#1ab394"></div>
<svg class="a" style="left:761px;top:791px" width="13" height="12" viewBox="0 0 13 12"><path d="M0 .5h2.300L4 7.500h6.800M3 2.200h9.500L11 6.500H4" fill="none" stroke="#fff" stroke-width="1.5"/><path d="M3.500 2.500h8.500l-1 3.800h-6.500Z" fill="#fff"/><circle cx="5" cy="10" r="1.300" fill="#fff"/><circle cx="10" cy="10" r="1.300" fill="#fff"/></svg>
<div class="a" style="left:792px;top:784px;width:493px;height:54px;background:#fff;border-radius:2px"></div>
<div class="a" style="left:788px;top:795px;width:8px;height:8px;background:#fff;transform:rotate(45deg)"></div>
<span class="t" style="left:805px;top:795px;font-size:12.7px;color:#676a6c">Course créée</span>
<span class="t" style="left:805px;top:816px;font-size:9.5px;font-weight:bold;color:#555">14/02/2023 à 11:29</span>
</div>
</body></html>
